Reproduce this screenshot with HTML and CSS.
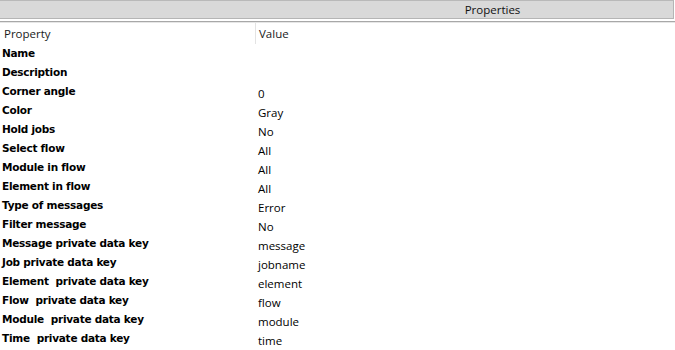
FILE: index.html
```html
<!DOCTYPE html>
<html lang="en">
<head>
    <meta charset="UTF-8">
    <title>Properties</title>
    <link rel="stylesheet" href="styles.css">
</head>
<body>
    <header class="title-bar">
        <span class="title">Properties</span>
    </header>

    <main class="props">
        <div class="head-row">
            <div class="head-cell">Property</div>
            <div class="head-cell divider">Value</div>
        </div>
        <div class="grid">
            <div class="name">Name</div><div class="value"></div>
            <div class="name">Description</div><div class="value"></div>
            <div class="name">Corner angle</div><div class="value">0</div>
            <div class="name">Color</div><div class="value">Gray</div>
            <div class="name">Hold jobs</div><div class="value">No</div>
            <div class="name">Select flow</div><div class="value">All</div>
            <div class="name">Module in flow</div><div class="value">All</div>
            <div class="name">Element in flow</div><div class="value">All</div>
            <div class="name">Type of messages</div><div class="value">Error</div>
            <div class="name">Filter message</div><div class="value">No</div>
            <div class="name">Message private data key</div><div class="value">message</div>
            <div class="name">Job private data key</div><div class="value">jobname</div>
            <div class="name">Element&nbsp; private data key</div><div class="value">element</div>
            <div class="name">Flow&nbsp; private data key</div><div class="value">flow</div>
            <div class="name">Module&nbsp; private data key</div><div class="value">module</div>
            <div class="name">Time&nbsp; private data key</div><div class="value">time</div>
        </div>
    </main>
</body>
</html>
```

FILE: styles.css
```css
body {
    margin: 0;
    padding: 0;
    background-color: #fff;
    font-family: "Open Sans", "Noto Sans", sans-serif;
    color: #000;
    overflow: hidden;
}

.title-bar {
    height: 17px;
    background-color: #d9d9d9;
    border-top: 1px solid #b9b9b9;
    border-bottom: 1px solid #b5b5b5;
    border-right: 1px solid #b5b5b5;
    margin-right: 1px;
    display: flex;
    align-items: center;
    justify-content: center;
    padding-left: 312px;
}

.title {
    font-size: 11.5px;
    color: #111;
}

.props {
    margin-top: 2px;
    border-top: 1px solid #a8a8a8;
}

.head-row {
    display: grid;
    grid-template-columns: 255px 1fr;
    height: 21px;
    border-top: 1px solid #e6e6e6;
}

.head-cell {
    font-size: 11.5px;
    padding: 3px 0 0 4px;
    color: #1a1a1a;
}

.divider {
    border-left: 1px solid #e3e3e3;
    padding-left: 3px;
}

.grid {
    display: grid;
    grid-template-columns: 256px 1fr;
    grid-auto-rows: 19px;
}

.name {
    font-family: "DejaVu Sans", sans-serif;
    font-weight: bold;
    font-size: 10.5px;
    letter-spacing: -0.25px;
    padding-left: 2px;
    line-height: 19px;
    white-space: nowrap;
}

.value {
    font-size: 11.5px;
    line-height: 19px;
    padding: 2px 0 0 2px;
}
```
